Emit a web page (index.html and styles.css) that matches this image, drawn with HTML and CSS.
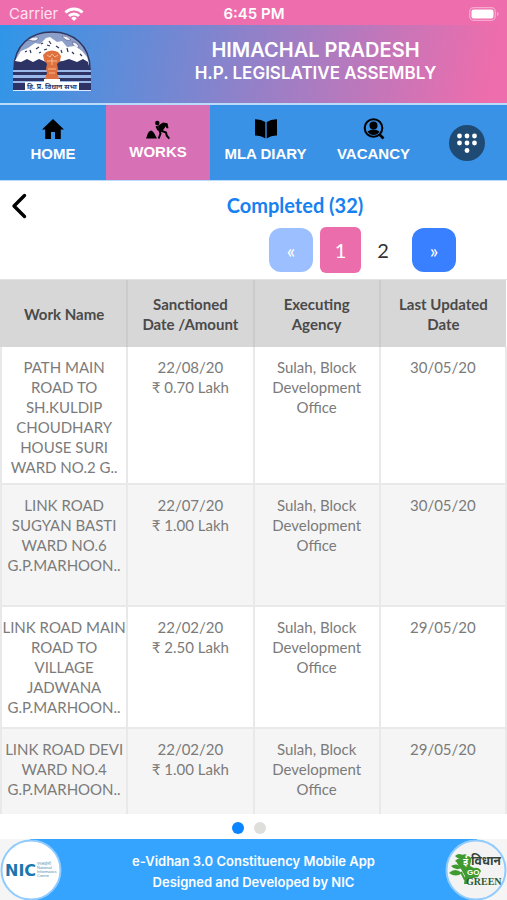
FILE: index.html
```html
<!DOCTYPE html>
<html lang="en">
<head>
<meta charset="utf-8">
<meta name="viewport" content="width=device-width, initial-scale=1">
<title>e-Vidhan - Works</title>
<link rel="stylesheet" href="styles.css">
</head>
<body>
<div class="status">
	<div class="carrier">Carrier
		<svg width="20" height="14" viewBox="0 0 20 14" fill="none" stroke="#fff" stroke-width="3"><path d="M1.5 5.5a12 12 0 0 1 17 0M5 9a7 7 0 0 1 10 0"/><path d="M10 14L7.2 11.2a4 4 0 0 1 5.6 0z" fill="#fff" stroke="none"/></svg>
	</div>
	<div class="time">6:45 PM</div>
	<div class="battery">
		<svg width="30" height="14" viewBox="0 0 30 14"><rect x=".7" y=".7" width="25.600" height="12.600" rx="4" fill="none" stroke="#f7a9cf" stroke-width="1.300"/><rect x="2.500" y="2.500" width="22" height="9" rx="2" fill="#fff"/><path d="M28 5v4q1.600-.5 1.600-2T28 5z" fill="#f7a9cf"/></svg>
	</div>
</div>

<header class="header">
	<svg class="emblem" viewBox="0 0 78 60" width="78" height="60">
		<path d="M1 38C1 14 18 1 39 1s38 13 38 37z" fill="#8b9fc9" stroke="#303560" stroke-width="1.500"/>
		<path d="M15 9q5-4 10-3 1 4-5 4zM49 5q5-1 9 4-5 2-9-4zM59 11q6 0 7 6-5 0-7-6z" fill="#f2f2fb" stroke="#4a5080" stroke-width=".6"/>
		<path d="M2 30l6-10 7-3 7-5 5 1 6-6 4-1 7 5 5-1 5 6 8-1 7 5 5 6 2 7v5H2z" fill="#fff"/>
		<path d="M12 21l2-1M17 19l1 3M23 18l3-2M28 13l2-1M31 19l3-1M36 10l2 3M34 14l3 1M43 15l3 2M48 19l1 3M54 17l1 4M59 21l2 2M67 23l2 2M26 22l2-1" stroke="#30355c" stroke-width="1.200"/>
		<path d="M1 39l1-9 6 1 6-3 6 3 6-3 7 3 9 0 8-1 6-2 8 3 6-3 5 3 2 8z" fill="#2d3365"/>
		<path d="M0 38h78v1H0zM0 41h78v3H0zM0 47h78v4H0z" fill="#2d3365"/>
		<path d="M0 39h78v2H0zM0 44h78v3H0zM0 50h78v2H0z" fill="#9bb8eb"/>
		<path d="M0 52h78v7H0z" fill="#2d3365"/>
		<path d="M33 21q6-3 12 0l3 4-1 5-3 3 1 5-1 4 2 6H32l2-6-1-4 1-5-3-4-1-5z" fill="#de713e"/>
		<path d="M34 24l3 2 2-3 3 3 3-2M34 30h10M39 27v7M35 38h8M36 42h6" fill="none" stroke="#ffc9a3" stroke-width=".8"/>
		<path d="M31 48h16v4H31zM12 51h54v8H12z" fill="#fff"/>
		<text x="39" y="58" class="emblem-text">हि. प्र. विधान सभा</text>
		<path d="M0 59h78v1H0z" fill="#dce8ff"/>
	</svg>
	<div class="title">
		<h1>HIMACHAL PRADESH</h1>
		<h2>H.P. LEGISLATIVE ASSEMBLY</h2>
	</div>
</header>

<nav class="nav">
	<a href="#">
		<svg width="24" height="24" viewBox="0 0 24 24"><path d="M12 2L1 12.500h3.200V22H10v-7h4v7h5.800v-9.500H23z"/></svg>
		HOME
	</a>
	<a href="#" class="active">
		<svg width="24" height="20" viewBox="0 0 24 20"><circle cx="11.300" cy="3" r="2.200"/><path d="M0 18.500l2-5.500q3-5 6 0l3 5.500z"/><path d="M12 5.800l5-3.300 4.500.7 1 5h-2l-.8-2-3.200 4.800-4-2z"/><path d="M10.500 6l1.500 3.500 8 3 .8 3.200 2.500 3" fill="none" stroke="#000" stroke-width="2"/><path d="M13.500 10.500l1 3-1.800 5" fill="none" stroke="#000" stroke-width="2"/></svg>
		WORKS
	</a>
	<a href="#">
		<svg width="24" height="24" viewBox="0 0 24 24"><path d="M11.300 5Q7 2 1 2.200v16.300q6 0 10.300 3zM12.700 5Q17 2 23 2.200v16.300q-6 0-10.300 3z"/></svg>
		MLA DIARY
	</a>
	<a href="#">
		<svg width="24" height="24" viewBox="0 0 24 24"><circle cx="11.500" cy="11" r="8.800" fill="none" stroke="#000" stroke-width="2"/><circle cx="11.500" cy="8.500" r="4"/><path d="M5.500 14.500q6-4 12 0-2 3.500-6 3.500t-6-3.500z"/><path d="M17 17l4.500 4.500" stroke="#000" stroke-width="2.600"/></svg>
		VACANCY
	</a>
	<button class="more" type="button" aria-label="More">
		<svg width="22" height="22" viewBox="0 0 22 22" fill="#fff"><circle cx="3.500" cy="4" r="2.400"/><circle cx="11" cy="4" r="2.400"/><circle cx="18.500" cy="4" r="2.400"/><circle cx="3.500" cy="11" r="2.400"/><circle cx="11" cy="11" r="2.400"/><circle cx="18.500" cy="11" r="2.400"/><circle cx="11" cy="18.500" r="2.400"/></svg>
	</button>
</nav>

<div class="toolbar">
	<button class="back" type="button" aria-label="Back">
		<svg width="16" height="26" viewBox="0 0 16 26"><path d="M13.500 2.500L3 13l10.500 10.500" fill="none" stroke="#000" stroke-width="3.400" stroke-linecap="round" stroke-linejoin="round"/></svg>
	</button>
	<div class="heading">Completed (32)</div>
</div>

<div class="pages">
	<button class="step" type="button" disabled>«</button>
	<button class="page current" type="button">1</button>
	<button class="page" type="button">2</button>
	<button class="step" type="button">»</button>
</div>

<div class="list">
	<table>
		<thead>
			<tr><th>Work Name</th><th>Sanctioned<br>Date /Amount</th><th>Executing<br>Agency</th><th>Last Updated<br>Date</th></tr>
		</thead>
		<tbody>
			<tr>
				<td>PATH MAIN<br>ROAD TO<br>SH.KULDIP<br>CHOUDHARY<br>HOUSE SURI<br>WARD NO.2 G..</td>
				<td>22/08/20<br>₹ 0.70 Lakh</td>
				<td>Sulah, Block<br>Development<br>Office</td>
				<td>30/05/20</td>
			</tr>
			<tr>
				<td>LINK ROAD<br>SUGYAN BASTI<br>WARD NO.6<br>G.P.MARHOON..</td>
				<td>22/07/20<br>₹ 1.00 Lakh</td>
				<td>Sulah, Block<br>Development<br>Office</td>
				<td>30/05/20</td>
			</tr>
			<tr>
				<td>LINK ROAD MAIN<br>ROAD TO<br>VILLAGE<br>JADWANA<br>G.P.MARHOON..</td>
				<td>22/02/20<br>₹ 2.50 Lakh</td>
				<td>Sulah, Block<br>Development<br>Office</td>
				<td>29/05/20</td>
			</tr>
			<tr>
				<td>LINK ROAD DEVI<br>WARD NO.4<br>G.P.MARHOON..</td>
				<td>22/02/20<br>₹ 1.00 Lakh</td>
				<td>Sulah, Block<br>Development<br>Office</td>
				<td>29/05/20</td>
			</tr>
		</tbody>
	</table>
</div>

<div class="dots"><span class="dot on"></span><span class="dot"></span></div>

<footer class="footer">
	<svg class="logo" width="62" height="62" viewBox="0 0 62 62">
		<circle cx="31" cy="31" r="29.500" fill="#fff" stroke="#8fcbff" stroke-width="2"/>
		<text x="5" y="37" class="nic">NIC</text>
		<text class="nic-small"><tspan x="37" y="26">एनआईसी</tspan><tspan x="37" y="30">National</tspan><tspan x="37" y="34">Informatics</tspan><tspan x="37" y="38">Centre</tspan></text>
	</svg>
	<p>e-Vidhan 3.0 Constituency Mobile App<br>Designed and Developed by NIC</p>
	<svg class="logo" width="62" height="62" viewBox="0 0 62 62">
		<circle cx="31" cy="31" r="29.500" fill="#f3f3f3" stroke="#8fcbff" stroke-width="2"/>
		<g fill="#3f9a2f">
			<path d="M17 16q4-2 6 1 4 1 3 5l-1 5 4 2q5-1 7 3l-3 6-9 2-1 5h-4l1-8-4-7-4-6q-1-3 2-3z"/>
			<path d="M10 22q4-5 9 0-3 5-9 0zM10 17q4-4 9 0-4 5-9 0zM6 27q6-4 11 2-7 3-11-2zM4 34q6-6 13 0-6 5-13 0z"/>
			<path d="M16 33l4 8" stroke="#3f9a2f" stroke-width="2"/>
		</g>
		<text x="18" y="26" class="vidhan-e">ई</text>
		<text x="26" y="26" class="vidhan">विधान</text>
		<text x="22" y="36" class="go">GO</text>
		<text x="21" y="46" class="green">GREEN</text>
	</svg>
</footer>
</body>
</html>
```
FILE: styles.css
```css
* { box-sizing: border-box; }
body { margin: 0; height: 100vh; display: flex; flex-direction: column; background: #fff; font: 15px/20px Lato, "Liberation Sans", sans-serif; color: #7b7b7b; }
button { border: 0; padding: 0; margin: 0; background: none; font: inherit; cursor: pointer; }
svg { display: block; }

.status { flex: none; height: 25px; padding: 2px 8px 0 9px; display: grid; grid-template-columns: 1fr auto 1fr; align-items: center; background: #ee6dac; color: #fff; font: 15px/20px Inter, sans-serif; }
.carrier { display: flex; align-items: center; gap: 6px; color: #ffe3f1; }
.time { font-weight: 600; }
.battery { justify-self: end; }

.header { flex: none; height: 80px; padding: 0 13px 6px; display: flex; align-items: center; background: linear-gradient(100deg, #2f96e8 0%, #ee6dac 96%); border-bottom: 2px solid #b9dcfb; color: #fff; }
.emblem { flex: none; }
.emblem-text { font: bold 7px "Noto Sans", sans-serif; fill: #2d3365; text-anchor: middle; }
.title { flex: 1; margin-left: 46px; text-align: center; font-family: Inter, sans-serif; }
.title h1 { margin: 0; font-size: 20px; line-height: 24px; font-weight: 600; }
.title h2 { margin: 0; font-size: 17px; line-height: 22px; font-weight: 600; }

.nav { flex: none; height: 76px; display: grid; grid-template-columns: 106fr 104fr 111fr 105fr 81fr; background: #3992e6; border-bottom: 1px solid #b9dcfb; }
.nav a { display: flex; flex-direction: column; align-items: center; gap: 3px; padding-top: 12px; color: #fff; font: bold 15px/20px "Liberation Sans", sans-serif; text-decoration: none; }
.nav .active { background: #d770b4; padding-top: 15px; gap: 2px; }
.nav a svg { fill: #000; }
.more { width: 36px; height: 36px; align-self: center; justify-self: center; display: flex; align-items: center; justify-content: center; border-radius: 50%; background: #1f4a73; }

.toolbar { flex: none; display: flex; align-items: flex-start; height: 43px; padding: 12px 11px 0; }
.heading { flex: 1; margin-left: 67px; text-align: center; color: #1681f0; font-size: 20px; line-height: 24px; font-weight: bold; }
.pages { flex: none; display: flex; align-items: center; height: 55px; padding-bottom: 4px; margin: 0 51px 0 auto; }
.step { width: 44px; height: 44px; border-radius: 12px; background: #3880ff; color: #fff; font-size: 20px; }
.step:disabled { background: #9bbfff; }
.page { width: 42px; height: 46px; margin: 0 8px 0 1px; border-radius: 6px; color: #333; font-size: 20px; }
.page.current { width: 41px; margin: 0 0 0 7px; background: #ec6dab; color: #fff; }

.list { flex: 1; min-height: 0; overflow: hidden; border-top: 1px solid #e3e3e3; }
table { width: 100%; table-layout: fixed; border-collapse: collapse; text-align: center; }
th { height: 67px; padding: 0; background: #d7d7d7; border-left: 2px solid #cbcbcb; color: #4a4a4a; font-weight: bold; }
th:first-child { border-color: #d7d7d7; }
td { height: 122px; padding: 10px 0 6px; vertical-align: top; border: 2px solid #e9e9e9; border-top: 0; white-space: nowrap; }
tbody tr:nth-child(even) { background: #f5f5f5; }

.dots { flex: none; height: 25px; display: flex; align-items: center; justify-content: center; gap: 10px; padding: 2px 9px 0 0; }
.dot { width: 12px; height: 12px; border-radius: 50%; background: #dededb; }
.dot.on { background: #0a84ff; }

.footer { flex: none; height: 61px; display: flex; align-items: center; justify-content: space-between; background: linear-gradient(90deg, #f5f5f5 30px, #35a4ff 30px, #35a4ff calc(100% - 30px), #f5f5f5 calc(100% - 30px)); color: #fff; }
.footer p { margin: 4px 0 0; text-align: center; font: 600 13px/21px Inter, sans-serif; }
.logo { flex: none; }
.nic { font: bold 16px "DejaVu Sans", sans-serif; fill: #1976ae; }
.nic-small { font: 4px "Liberation Sans", sans-serif; fill: #4c8fb0; }
.vidhan { font: bold 12px "Noto Sans", serif; fill: #33443a; }
.vidhan-e { font: bold 10px "Noto Sans", serif; fill: #fff; }
.go { font: bold 8px "Liberation Sans", sans-serif; fill: #fff; }
.green { font: bold 10px "Liberation Serif", serif; fill: #2c5c38; }
```
